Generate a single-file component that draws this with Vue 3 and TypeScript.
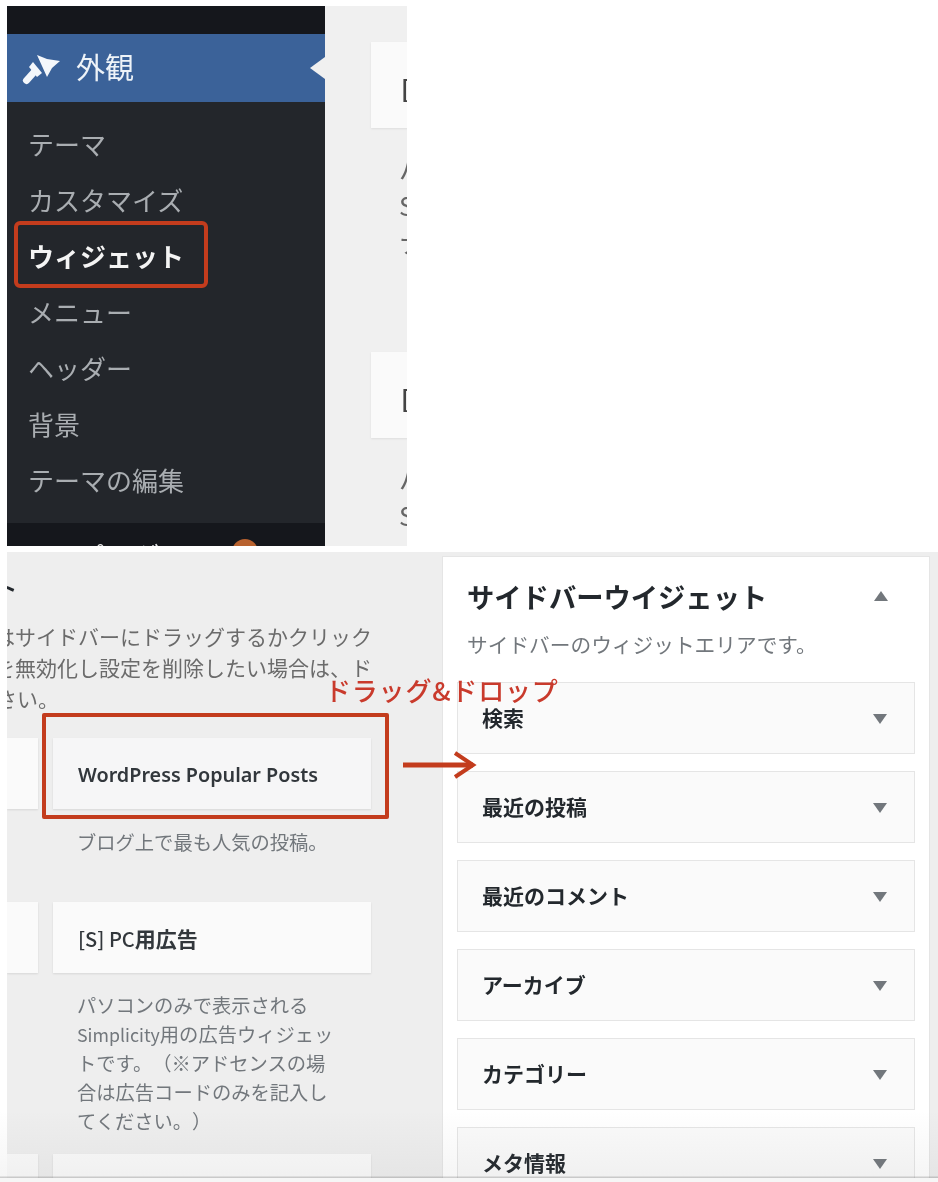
<script setup lang="ts">
const menuItems: { label: string; current?: boolean }[] = [
  { label: 'テーマ' },
  { label: 'カスタマイズ' },
  { label: 'ウィジェット', current: true },
  { label: 'メニュー' },
  { label: 'ヘッダー' },
  { label: '背景' },
  { label: 'テーマの編集' },
]
const peekBlocks = [
  { title: '[S] 広告', lines: ['パ', 'Simplicity', 'ナ'] },
  { title: '[S] 広告', lines: ['パ', 'Simplicity', 'ト'] },
]
const introLines = [
  'はサイドバーにドラッグするかクリック',
  'を無効化し設定を削除したい場合は、ド',
  'さい。',
]
const widgets = ['検索', '最近の投稿', '最近のコメント', 'アーカイブ', 'カテゴリー', 'メタ情報']
</script>

<template>
  <div class="page">
    <section class="shot-top">
      <aside class="wp-menu">
        <div class="wp-menu-bar"></div>
        <div class="wp-menu-active">
          <svg class="brush" viewBox="0 0 40 34" width="40" height="34" aria-hidden="true">
            <path d="M4.5 29.5 L13 20" stroke="#f4f7fb" stroke-width="7" stroke-linecap="round" fill="none" />
            <path d="M11 11 L20 22 L15 26 L7 16 Z" fill="#f4f7fb" />
            <path d="M15 4 L25 8 L38 10 L30 17 L25 26 Z" fill="#f4f7fb" />
          </svg>
          <span class="wp-menu-active-label">外観</span>
          <span class="caret"></span>
        </div>
        <ul class="wp-submenu">
          <li v-for="item in menuItems" :key="item.label" :class="{ current: item.current }">{{ item.label }}</li>
        </ul>
        <div class="wp-menu-next">
          <span class="wp-menu-next-label">プラグイン</span>
          <span class="badge"></span>
        </div>
      </aside>
      <div class="peek">
        <div v-for="(block, i) in peekBlocks" :key="i" class="peek-block">
          <div class="peek-card">{{ block.title }}</div>
          <p v-for="line in block.lines" :key="line" class="peek-line">{{ line }}</p>
        </div>
      </div>
    </section>

    <section class="shot-bottom">
      <div class="available">
        <h2 class="available-title"><span>利用できるウィジェット</span></h2>
        <div class="intro">
          <p v-for="line in introLines" :key="line" :class="['intro-line', { short: line.length < 5 }]"><span>{{ line }}</span></p>
        </div>
        <div class="widget-grid">
          <div class="widget-cell">
            <div class="widget-card stub"></div>
          </div>
          <div class="widget-cell">
            <div class="widget-card first">WordPress Popular Posts</div>
            <p class="widget-desc one">ブログ上で最も人気の投稿。</p>
          </div>
          <div class="widget-cell">
            <div class="widget-card stub"></div>
          </div>
          <div class="widget-cell">
            <div class="widget-card">[S] PC<b class="heavy">用広告</b></div>
            <p class="widget-desc">パソコンのみで表示される<br /><span class="latin">Simplicity</span>用の広告ウィジェッ<br />トです。（※アドセンスの場<br />合は広告コードのみを記入し<br />てください。）</p>
          </div>
          <div class="widget-cell">
            <div class="widget-card stub"></div>
          </div>
          <div class="widget-cell">
            <div class="widget-card">[S] モバイル用広告</div>
          </div>
        </div>
      </div>

      <div class="sidebar-panel">
        <div class="panel-head">
          <h2 class="panel-title">サイドバーウイジェット</h2>
          <span class="tri up"></span>
        </div>
        <p class="panel-desc">サイドバーのウィジットエリアです。</p>
        <div class="panel-widgets">
          <div v-for="w in widgets" :key="w" class="panel-widget">
            <span class="panel-widget-name">{{ w }}</span>
            <span class="tri"></span>
          </div>
        </div>
      </div>
    </section>

    <div class="mark mark-menu"></div>
    <div class="mark mark-widget"></div>
    <div class="drag-label">ドラッグ&amp;ドロップ</div>
    <svg class="drag-arrow" viewBox="0 0 74 30" width="74" height="30" aria-hidden="true">
      <path d="M0 15 H70" stroke="#c33c1d" stroke-width="5" fill="none" />
      <path d="M52 3 L70 15 L52 27" stroke="#c33c1d" stroke-width="4" fill="none" />
    </svg>
    <div class="bottom-fade"></div>
  </div>
</template>

<style>
html, body { margin: 0; background: #fff; }
</style>

<style scoped>
* { box-sizing: border-box; }
p, h2, ul { margin: 0; padding: 0; }
.page {
  position: relative;
  width: 938px;
  height: 1182px;
  overflow: hidden;
  background: #fff;
  font-family: "Noto Sans CJK JP", "Noto Sans", sans-serif;
  text-spacing-trim: space-all;
  filter: blur(0.45px);
}

/* top screenshot */
.shot-top {
  display: flex;
  width: 400px;
  height: 540px;
  margin: 6px 0 0 7px;
  overflow: hidden;
}
.wp-menu {
  width: 318px;
  flex: none;
  background: #23262b;
  display: flex;
  flex-direction: column;
}
.wp-menu-bar { flex: none; height: 28px; background: #15171c; }
.wp-menu-active {
  position: relative;
  flex: none;
  height: 68px;
  background: #3b6299;
  display: flex;
  align-items: center;
  padding-left: 15px;
  color: #eef3f8;
  font-size: 29px;
}
.brush { flex: none; margin-top: 0; }
.wp-menu-active-label { margin: -3px 0 0 14px; line-height: 1; }
.caret {
  position: absolute;
  right: 0;
  top: 23px;
  border-style: solid;
  border-width: 11px 15px 11px 0;
  border-color: transparent #f0f0f0 transparent transparent;
}
.wp-submenu {
  list-style: none;
  flex: none;
  height: 421px;
  padding: 14px 0 0 21px;
  color: #a9adb1;
  font-size: 26px;
}
.wp-submenu li { height: 56px; line-height: 56px; }
.wp-submenu .current { color: #f4f4f4; font-weight: 700; }
.wp-menu-next {
  position: relative;
  flex: none;
  height: 23px;
  overflow: hidden;
  background: #15171c;
  padding-left: 69px;
  color: #e8e8e8;
  font-size: 28px;
  line-height: 40px;
  padding-top: 13px;
}
.wp-menu-next-label { display: block; }
.badge {
  position: absolute;
  left: 225px;
  top: 16px;
  width: 26px;
  height: 26px;
  border-radius: 50%;
  background: #b8622f;
}
.peek {
  flex: 1;
  background: #f0f0f0;
  padding: 36px 0 0 46px;
  overflow: hidden;
}
.peek-block { height: 310px; }
.peek-card {
  width: 200px;
  height: 86px;
  background: #fafafa;
  box-shadow: 0 1px 2px rgba(0, 0, 0, 0.08);
  padding-left: 30px;
  line-height: 92px;
  font-size: 24px;
  font-weight: 700;
  color: #444;
  white-space: nowrap;
  margin-bottom: 21px;
}
.peek-line {
  padding-left: 28px;
  width: 200px;
  font-size: 26px;
  line-height: 37px;
  color: #666;
  white-space: nowrap;
}

/* bottom screenshot */
.shot-bottom {
  display: flex;
  height: 630px;
  margin: 6px 0 0 7px;
  background: #eeeeee;
}
.available {
  width: 435px;
  flex: none;
  overflow: hidden;
}
.available-title {
  width: 11px;
  height: 40px;
  margin-top: 15px;
  display: flex;
  justify-content: flex-end;
  overflow: hidden;
  font-size: 26px;
  font-weight: 500;
  line-height: 40px;
  color: #23282d;
  white-space: nowrap;
}
.available-title span { flex: none; }
.intro {
  width: 365px;
  margin-top: 14px;
  overflow: hidden;
}
.intro-line {
  display: flex;
  justify-content: flex-end;
  height: 31px;
  line-height: 31px;
  font-size: 21px;
  color: #6b6b6b;
  white-space: nowrap;
}
.intro-line span { flex: none; }
.intro-line.short { justify-content: flex-start; }
.intro-line.short span { margin-left: -11px; }
.widget-grid {
  display: grid;
  grid-template-columns: 31px 318px;
  column-gap: 15px;
  row-gap: 18px;
  margin-top: 24px;
  align-items: start;
}
.widget-card {
  height: 71px;
  background: #fafafa;
  box-shadow: 0 1px 2px rgba(0, 0, 0, 0.1);
  padding-left: 25px;
  line-height: 73px;
  font-size: 20px;
  font-weight: 500;
  color: #32373c;
  white-space: nowrap;
}
.heavy { font-weight: 700; font-size: 21px; }
.widget-card.first { background: #f6f6f7; font-family: "Noto Sans", sans-serif; font-size: 19.8px; font-weight: 600; }
.widget-card.stub { padding: 0; }
.widget-desc {
  margin-top: 18px;
  padding-left: 24px;
  font-size: 19.3px;
  line-height: 29px;
  color: #72777c;
  white-space: nowrap;
}
.widget-desc.one { min-height: 56px; margin-top: 19px; }
.latin { font-size: 17.8px; }

.sidebar-panel {
  width: 488px;
  flex: none;
  margin-top: 4px;
  background: #fff;
  border: 1px solid #e5e5e5;
  border-bottom: none;
  padding: 19px 14px 0;
}
.panel-head {
  display: flex;
  justify-content: space-between;
  align-items: center;
  height: 40px;
  padding: 0 27px 0 10px;
}
.panel-title {
  font-size: 27.3px;
  font-weight: 700;
  line-height: 40px;
  color: #23282d;
}
.panel-desc {
  margin: 13px 0 0 10px;
  font-size: 20.7px;
  line-height: 30px;
  color: #72777c;
  white-space: nowrap;
}
.panel-widgets {
  display: flex;
  flex-direction: column;
  gap: 17px;
  margin-top: 23px;
}
.panel-widget {
  display: flex;
  flex: none;
  justify-content: space-between;
  align-items: center;
  height: 72px;
  background: #fafafa;
  border: 1px solid #e5e5e5;
  padding: 0 27px 0 24px;
  font-size: 21px;
  font-weight: 700;
  color: #23282d;
}
.panel-widget-name { margin-bottom: 2px; }
.panel-widget .tri { margin-top: 1px; }
.tri {
  flex: none;
  width: 0;
  height: 0;
  border-style: solid;
  border-width: 10px 7px 0;
  border-color: #72777c transparent transparent;
}
.tri.up {
  border-width: 0 7px 10px;
  border-color: transparent transparent #72777c;
}

/* annotations */
.mark {
  position: absolute;
  border: 4px solid #c33c1d;
}
.mark-menu { left: 14px; top: 221px; width: 194px; height: 67px; border-radius: 6px; }
.mark-widget { left: 42px; top: 713px; width: 347px; height: 106px; border-radius: 2px; }
.drag-label {
  position: absolute;
  left: 325px;
  top: 672px;
  font-size: 26px;
  line-height: 36px;
  font-weight: 500;
  letter-spacing: 0.8px;
  color: #c93a2c;
  white-space: nowrap;
}
.drag-arrow { position: absolute; left: 403px; top: 750px; }
.bottom-fade {
  position: absolute;
  left: 0;
  right: 0;
  bottom: 0;
  height: 72px;
  border-bottom: 4px solid #f6f6f6;
  background: linear-gradient(rgba(120, 120, 120, 0) 0, rgba(120, 120, 120, 0.07) 66px, rgba(90, 90, 90, 0.3) 67px);
}
</style>
